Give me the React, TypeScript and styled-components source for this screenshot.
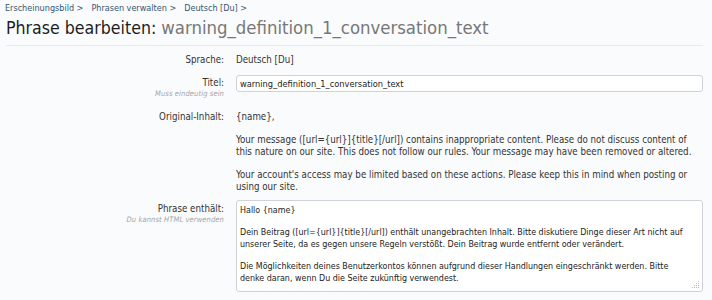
import React from "react";
import styled, { createGlobalStyle } from "styled-components";

const Global = createGlobalStyle`
  html, body { margin: 0; padding: 0; background: #fafbfd; }
  body { font-family: "DejaVu Sans Condensed", "DejaVu Sans", sans-serif; color: #333; }
`;

const Page = styled.div`
  padding: 2px 9px 0 5px;
`;

const Crumbs = styled.div`
  display: flex;
  gap: 8px;
  font-size: 9px;
  line-height: 12px;
  color: #35566f;
`;

const Crumb = styled.span``;

const TitleBar = styled.h1`
  margin: 2px 0 0 1px;
  padding-bottom: 5px;
  border-bottom: 1px solid #e1ecf3;
  font-weight: 400;
  font-size: 17.6px;
  line-height: 24px;
  color: #1d1d1d;
`;

const Muted = styled.span`
  font-size: 18.4px;
  color: #777;
`;

const Form = styled.div`
  margin-top: 8px;
  font-size: 9.68px;
  line-height: 12px;
`;

const Row = styled.div<{ $gap: number }>`
  display: grid;
  grid-template-columns: 219px 1fr;
  column-gap: 12px;
  margin-bottom: ${(p) => p.$gap}px;
`;

const Label = styled.div<{ $pad?: number }>`
  text-align: right;
  color: #333;
  padding-top: ${(p) => p.$pad ?? 0}px;
`;

const Hint = styled.div`
  font-size: 7.5px;
  line-height: 10px;
  letter-spacing: 0.1px;
  font-style: italic;
  color: #a4a4a4;
`;

const Value = styled.div`
  color: #333;
`;

const Para = styled.p<{ $gap?: number }>`
  margin: 0 0 ${(p) => p.$gap ?? 11}px 0;
  &:last-child { margin-bottom: 0; }
`;

const TextInput = styled.div`
  height: 15px;
  border: 1px solid #cfd2d8;
  border-radius: 3px;
  background: #fff;
  padding: 0 3px;
  line-height: 15px;
  font-size: 9.2px;
  color: #222;
`;

const TextArea = styled.div`
  position: relative;
  height: 84px;
  border: 1px solid #cfd2d8;
  border-radius: 3px;
  background: #fff;
  padding: 3px 12px 3px 3px;
  font-size: 8.87px;
  line-height: 12px;
  color: #222;
`;

const Grip = styled.svg`
  position: absolute;
  right: 2px;
  bottom: 2px;
`;

const original = [
  "{name},",
  "Your message ([url={url}]{title}[/url]) contains inappropriate content. Please do not discuss content of this nature on our site. This does not follow our rules. Your message may have been removed or altered.",
  "Your account's access may be limited based on these actions. Please keep this in mind when posting or using our site.",
];

const phrase = [
  "Hallo {name}",
  "Dein Beitrag ([url={url}]{title}[/url]) enthält unangebrachten Inhalt. Bitte diskutiere Dinge dieser Art nicht auf unserer Seite, da es gegen unsere Regeln verstößt. Dein Beitrag wurde entfernt oder verändert.",
  "Die Möglichkeiten deines Benutzerkontos können aufgrund dieser Handlungen eingeschränkt werden. Bitte denke daran, wenn Du die Seite zukünftig verwendest.",
];

export default function App() {
  return (
    <>
      <Global />
      <Page>
        <Crumbs>
          <Crumb>Erscheinungsbild &gt;</Crumb>
          <Crumb>Phrasen verwalten &gt;</Crumb>
          <Crumb>Deutsch [Du] &gt;</Crumb>
        </Crumbs>
        <TitleBar>
          Phrase bearbeiten: <Muted>warning_definition_1_conversation_text</Muted>
        </TitleBar>
        <Form>
          <Row $gap={9}>
            <Label>Sprache:</Label>
            <Value>Deutsch [Du]</Value>
          </Row>

          <Row $gap={12}>
            <Label $pad={2}>
              Titel:
              <Hint>Muss eindeutig sein</Hint>
            </Label>
            <div>
              <TextInput>warning_definition_1_conversation_text</TextInput>
            </div>
          </Row>

          <Row $gap={7}>
            <Label>Original-Inhalt:</Label>
            <Value>
              {original.map((t) => (
                <Para key={t}>{t}</Para>
              ))}
            </Value>
          </Row>

          <Row $gap={0}>
            <Label $pad={3}>
              Phrase enthält:
              <Hint>Du kannst HTML verwenden</Hint>
            </Label>
            <TextArea>
              {phrase.map((t) => (
                <Para key={t} $gap={10}>{t}</Para>
              ))}
              <Grip width="8" height="8" viewBox="0 0 8 8">
                <g fill="#bbb">
                  <rect x="6" y="0" width="1" height="1" />
                  <rect x="4" y="2" width="1" height="1" />
                  <rect x="6" y="2" width="1" height="1" />
                  <rect x="2" y="4" width="1" height="1" />
                  <rect x="4" y="4" width="1" height="1" />
                  <rect x="6" y="4" width="1" height="1" />
                  <rect x="0" y="6" width="1" height="1" />
                  <rect x="2" y="6" width="1" height="1" />
                  <rect x="4" y="6" width="1" height="1" />
                  <rect x="6" y="6" width="1" height="1" />
                </g>
              </Grip>
            </TextArea>
          </Row>
        </Form>
      </Page>
    </>
  );
}
